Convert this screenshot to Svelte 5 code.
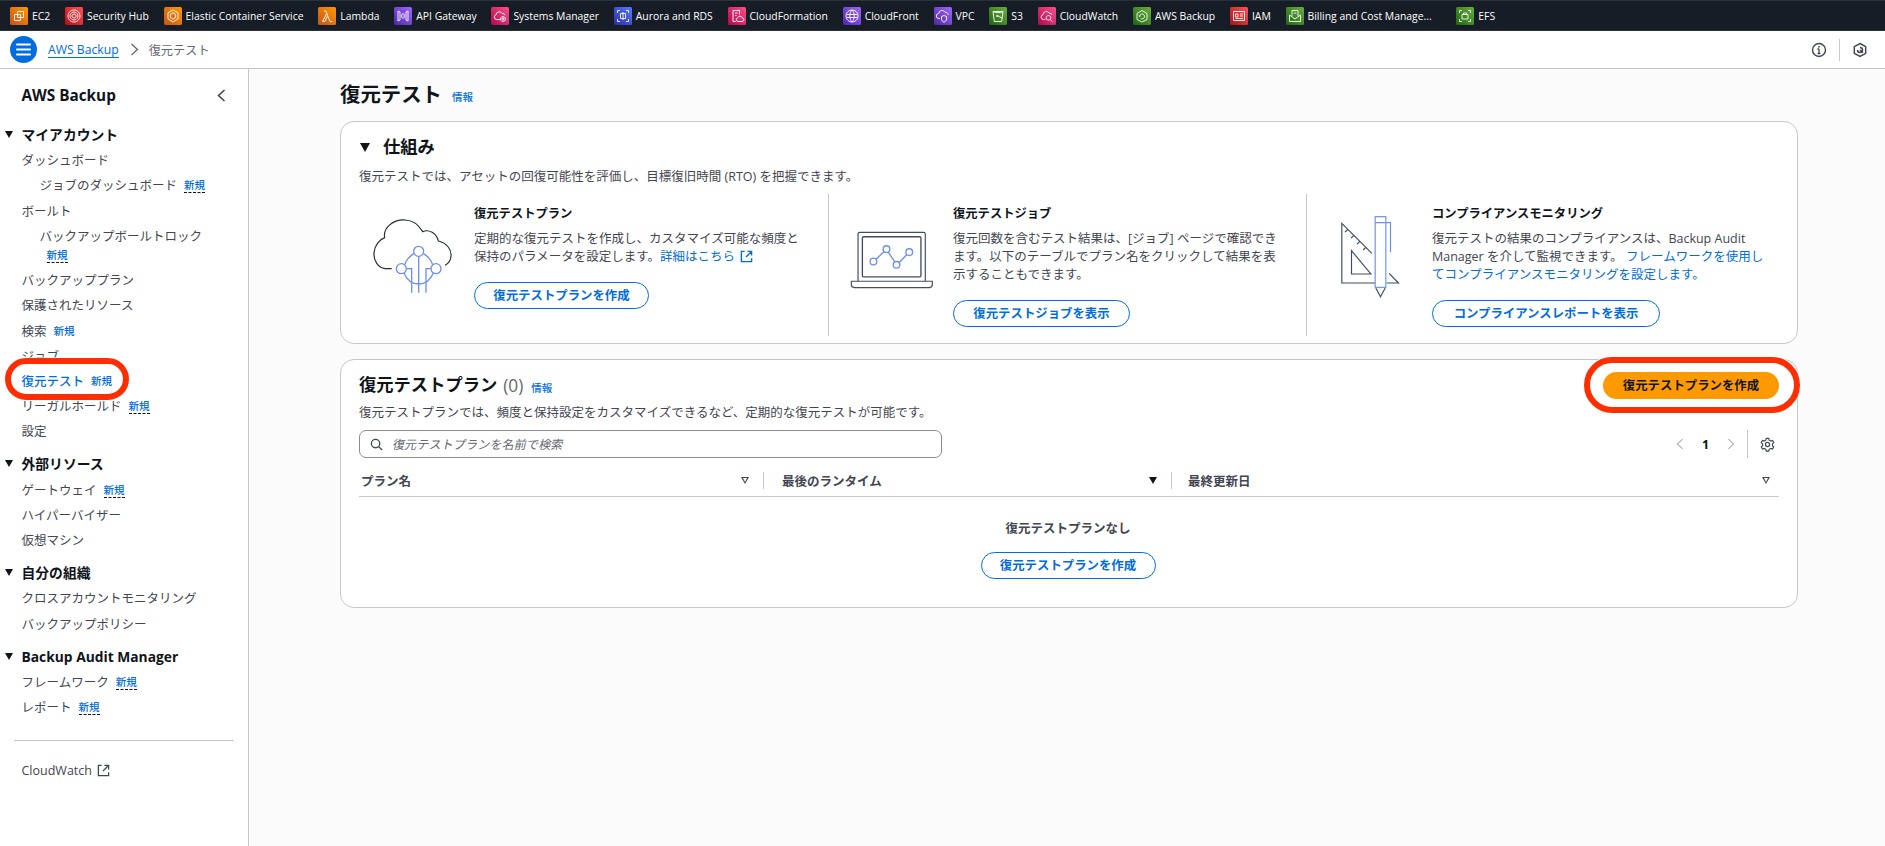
<script>
  const services = [
    { n: 'EC2', g: 'o', d: ['M7.5 4.5h6v6h-6z', 'M4.5 7.5h6v6h-6z'] },
    { n: 'Security Hub', g: 'r', d: ['M9 3a6 6 0 1 0 .01 0z', 'M9 5a4 4 0 1 0 .01 0z', 'M9 7a2 2 0 1 0 .01 0z'] },
    { n: 'Elastic Container Service', g: 'o', d: ['M9 3l5 2.7v6.2L9 15l-5-3.1V5.7z', 'M9 5.8l2.6 1.5v3.3L9 12.2l-2.6-1.6V7.3z'] },
    { n: 'Lambda', g: 'o', d: ['M4.5 14.5h2.2l3-5.6 2.4 5.6h2.1', 'M9.7 8.9L7.9 4h-1.9', 'M4.5 14.5l4.2-8'] },
    { n: 'API Gateway', g: 'p', d: ['M4 4l2 1v8l-2 1z', 'M14 4l-2 1v8l2 1z', 'M8.5 6.5L7.5 9l1 2.5', 'M9.5 6.5l1 2.5-1 2.5'] },
    { n: 'Systems Manager', g: 'k', d: ['M9 12.5H5.5a2.4 2.4 0 0 1-.4-4.7 3.2 3.2 0 0 1 6-1.3 2.3 2.3 0 0 1 2.8 1.7', 'M12 9.5a2.5 2.5 0 1 0 .01 0z', 'M12 11a1 1 0 1 0 .01 0z'] },
    { n: 'Aurora and RDS', g: 'b', d: ['M3.5 6V3.5H6', 'M12 3.5h2.5V6', 'M3.5 12v2.5H6', 'M12 14.5h2.5V12', 'M6.5 6.5h5v5h-5z', 'M9 5v8'] },
    { n: 'CloudFormation', g: 'k', d: ['M5 3.5h6.5v3.8', 'M5 3.5v11h3', 'M7 6h2.5', 'M7 8.5h1.5', 'M10 14.5a2 2 0 0 1-.3-3.9 2.4 2.4 0 0 1 4.5.3 1.8 1.8 0 0 1-.2 3.6z'] },
    { n: 'CloudFront', g: 'p', d: ['M9 3a6 6 0 1 0 .01 0z', 'M9 3c-3 3-3 9 0 12', 'M9 3c3 3 3 9 0 12', 'M3.5 7.5h11', 'M3.5 10.5h11'] },
    { n: 'VPC', g: 'p', d: ['M6 11.5H5a2.5 2.5 0 0 1-.3-5 3.4 3.4 0 0 1 6.4-1.2 2.6 2.6 0 0 1 3 2.6', 'M10 8.5l2.5 1v2.5c0 1.5-1 2.5-2.5 3.2-1.5-.7-2.5-1.7-2.5-3.2V9.5z'] },
    { n: 'S3', g: 'g', d: ['M4 4.5h10l-1.3 10H5.3z', 'M4 4.5c2 1.5 8 1.5 10 0', 'M8 8.5l5 2.5', 'M8 8.5a.6.6 0 1 0 .01 0z'] },
    { n: 'CloudWatch', g: 'k', d: ['M7.5 12.5H5.3a2.5 2.5 0 0 1-.3-4.9 3.3 3.3 0 0 1 6.2-1.4 2.5 2.5 0 0 1 2.9 1.8', 'M10.5 8.5a2.3 2.3 0 1 0 .01 0z', 'M12.2 12.5l2.3 2.3'] },
    { n: 'AWS Backup', g: 'g', d: ['M9 3.5l5 3v6l-5 2.5-5-2.5v-6z', 'M6.5 9.5a2.5 2.5 0 1 1 1.2 2.1', 'M6 8.5l.5 1 1-.5'] },
    { n: 'IAM', g: 'r', d: ['M3.5 4.5h11v9h-11z', 'M5.5 7h2.5v3H5.5z', 'M10 7h3', 'M10 9h3', 'M5.5 11.5h7.5'] },
    { n: 'Billing and Cost Manage...', g: 'g', trunc: true, d: ['M6 9V3.5h6V9', 'M3.5 8l5.5 4 5.5-4v6.5h-11z', 'M7.8 6h2.4'] },
    { n: 'EFS', g: 'g', d: ['M3.5 6V3.5H6', 'M12 3.5h2.5V6', 'M3.5 12v2.5H6', 'M12 14.5h2.5V12', 'M6 7.5h6v4.5H6z', 'M7.5 7.5V6h3v1.5'] }
  ];

  const sections = [
    {
      title: 'マイアカウント',
      items: [
        { t: 'ダッシュボード' },
        { t: 'ジョブのダッシュボード', sub: true, badge: 'dash' },
        { t: 'ボールト' },
        { t: 'バックアップボールトロック', sub: true, badge: 'dash', wrap: true },
        { t: 'バックアッププラン' },
        { t: '保護されたリソース' },
        { t: '検索', badge: 'plain' },
        { t: 'ジョブ' },
        { t: '復元テスト', badge: 'plain', active: true },
        { t: 'リーガルホールド', badge: 'dash' },
        { t: '設定' }
      ]
    },
    {
      title: '外部リソース',
      items: [{ t: 'ゲートウェイ', badge: 'dash' }, { t: 'ハイパーバイザー' }, { t: '仮想マシン' }]
    },
    { title: '自分の組織', items: [{ t: 'クロスアカウントモニタリング' }, { t: 'バックアップポリシー' }] },
    {
      title: 'Backup Audit Manager',
      items: [{ t: 'フレームワーク', badge: 'dash' }, { t: 'レポート', badge: 'dash' }]
    }
  ];
</script>

<div class="page">
  <svg class="defs" width="0" height="0" aria-hidden="true">
    <defs>
      <linearGradient id="g-o" x1="0" y1="1" x2="1" y2="0"><stop offset="0" stop-color="#c8511b" /><stop offset="1" stop-color="#ff9900" /></linearGradient>
      <linearGradient id="g-r" x1="0" y1="1" x2="1" y2="0"><stop offset="0" stop-color="#bd0816" /><stop offset="1" stop-color="#ff5252" /></linearGradient>
      <linearGradient id="g-p" x1="0" y1="1" x2="1" y2="0"><stop offset="0" stop-color="#4d27a8" /><stop offset="1" stop-color="#a166ff" /></linearGradient>
      <linearGradient id="g-k" x1="0" y1="1" x2="1" y2="0"><stop offset="0" stop-color="#b0084d" /><stop offset="1" stop-color="#ff4f8b" /></linearGradient>
      <linearGradient id="g-b" x1="0" y1="1" x2="1" y2="0"><stop offset="0" stop-color="#2e27ad" /><stop offset="1" stop-color="#527fff" /></linearGradient>
      <linearGradient id="g-g" x1="0" y1="1" x2="1" y2="0"><stop offset="0" stop-color="#1b660f" /><stop offset="1" stop-color="#6cae3e" /></linearGradient>
    </defs>
  </svg>

  <header class="topbar">
    {#each services as s}
      <div class="svc" class:trunc={s.trunc}>
        <svg class="svc-icon" viewBox="0 0 18 18">
          <rect width="18" height="18" rx="1.5" fill="url(#g-{s.g})" />
          {#each s.d as p}
            <path d={p} fill="none" stroke="#fff" stroke-width="0.9" />
          {/each}
        </svg>
        <span>{s.n}</span>
      </div>
    {/each}
  </header>

  <div class="crumbs">
    <div class="burger">
      <svg viewBox="0 0 27 27" width="27" height="27">
        <circle cx="13.5" cy="13.5" r="13.5" fill="#006ce0" />
        <path d="M7 8.5h13M7 13.5h13M7 18.5h13" stroke="#fff" stroke-width="2" stroke-linecap="round" />
      </svg>
    </div>
    <a class="crumb-link">AWS Backup</a>
    <svg class="crumb-sep" viewBox="0 0 9 13" width="9" height="13"><path d="M1.5 1l6 5.5-6 5.5" fill="none" stroke="#656871" stroke-width="1.3" /></svg>
    <span class="crumb-cur">復元テスト</span>
    <div class="crumb-tools">
      <svg viewBox="0 0 16 16" width="16" height="16"><circle cx="8" cy="8" r="6.5" fill="none" stroke="#424650" stroke-width="1.4" /><path d="M8 7v4.5M6.5 11.5h3M6.5 7H8" fill="none" stroke="#424650" stroke-width="1.3" /><circle cx="8" cy="4.8" r=".9" fill="#424650" /></svg>
      <i class="tool-sep"></i>
      <svg viewBox="0 0 16 16" width="16" height="16"><path d="M8 1.5l5.7 3.2v6.6L8 14.5l-5.7-3.2V4.7z" fill="none" stroke="#424650" stroke-width="1.5" /><path d="M5.5 8a2.5 2.5 0 1 0 2.5-2.5M8 8l3 2.5" fill="none" stroke="#424650" stroke-width="1.5" /></svg>
    </div>
  </div>

  <div class="body">
    <aside class="side">
      <div class="side-head">
        <span>AWS Backup</span>
        <svg viewBox="0 0 9 13" width="9" height="13"><path d="M7.5 1l-6 5.5 6 5.5" fill="none" stroke="#424650" stroke-width="1.6" /></svg>
      </div>
      {#each sections as sec}
        <section class="sec">
          <div class="sec-title"><i class="tri"></i>{sec.title}</div>
          {#each sec.items as it}
            <div class="item" class:sub={it.sub} class:active={it.active} class:wrap={it.wrap}>
              <span class="label">{it.t}</span>
              {#if it.badge}
                <span class="new" class:dash={it.badge === 'dash'}>新規</span>
              {/if}
            </div>
          {/each}
        </section>
      {/each}
      <hr class="side-rule" />
      <div class="side-ext">
        CloudWatch
        <svg viewBox="0 0 14 14" width="13" height="13"><path d="M5 1.5H1.5v11h11V9M8 1.5h4.5V6M12.5 1.5L6.5 7.5" fill="none" stroke="#424650" stroke-width="1.4" /></svg>
      </div>
    </aside>

    <main class="main">
      <div class="page-title">
        <h1>復元テスト</h1>
        <a class="info">情報</a>
      </div>

      <section class="card how">
        <div class="how-title"><i class="tri big"></i><h2>仕組み</h2></div>
        <p class="how-desc">復元テストでは、アセットの回復可能性を評価し、目標復旧時間 (RTO) を把握できます。</p>
        <div class="how-grid">
          <div class="col">
            <div class="art art1">
              <svg viewBox="120 435 255 240" width="85" height="80">
                <path d="M185 593H165C145 590 130 570 132 545C134 522 150 505 164 500C158 470 190 445 225 447C250 448 268 465 278 482C296 474 320 486 325 510C350 516 365 535 363 555C362 570 355 578 345 583" fill="none" stroke="#232b37" stroke-width="3.5" />
                <g fill="none" stroke="#6c8ff5" stroke-width="4">
                  <circle cx="266" cy="541" r="15" /><circle cx="214" cy="593" r="15" /><circle cx="318" cy="593" r="15" />
                  <path d="M252 548A60 60 0 0 0 224 581M280 548A60 60 0 0 1 308 581M222 606C240 650 292 650 310 606" />
                  <path d="M245 665V593H230M266 556V665M288 665V593H303" />
                </g>
              </svg>
            </div>
            <div class="col-text">
              <h3>復元テストプラン</h3>
              <p>定期的な復元テストを作成し、カスタマイズ可能な頻度と保持のパラメータを設定します。<a class="link">詳細はこちら <svg class="ext" viewBox="0 0 14 14" width="13" height="13"><path d="M5 1.5H1.5v11h11V9M8 1.5h4.5V6M12.5 1.5L6.5 7.5" fill="none" stroke="#006ce0" stroke-width="1.5" /></svg></a></p>
              <button class="btn w1">復元テストプランを作成</button>
            </div>
          </div>
          <div class="col">
            <div class="art art2">
              <svg viewBox="85 175 260 185" width="87" height="62">
                <g fill="none" stroke="#414d5c">
                  <path d="M115 330V190q0-5 5-5h191q5 0 5 5v140" stroke-width="3.5" />
                  <rect x="128" y="198" width="175" height="120" rx="4" stroke-width="4" />
                  <path d="M95 331h242v10q0 9-9 9H104q-9 0-9-9z" stroke-width="3.5" />
                </g>
                <g fill="none" stroke="#6c8ff5" stroke-width="4">
                  <circle cx="161" cy="272" r="10" /><circle cx="200" cy="235" r="10" /><circle cx="230" cy="282" r="10" /><circle cx="268" cy="244" r="10" />
                  <path d="M169 265L193 242M205 244L225 273M238 275L261 251" />
                </g>
              </svg>
            </div>
            <div class="col-text">
              <h3>復元テストジョブ</h3>
              <p>復元回数を含むテスト結果は、[ジョブ] ページで確認できます。以下のテーブルでプラン名をクリックして結果を表示することもできます。</p>
              <button class="btn w2">復元テストジョブを表示</button>
            </div>
          </div>
          <div class="col">
            <div class="art art3">
              <svg viewBox="120 130 185 255" width="62" height="85">
                <g fill="none" stroke="#414d5c" stroke-width="3.5">
                  <path d="M228 337H128V158L218 248M270 308L298 337H262" />
                  <path d="M157 240V310H215z" />
                  <path d="M146 176l-8 8M164 194l-8 8M182 212l-8 8M200 230l-8 8" />
                  <path d="M230 352L244 378L258 352" />
                </g>
                <g fill="none" stroke="#6c8ff5" stroke-width="3.5">
                  <rect x="228" y="138" width="32" height="212" />
                  <path d="M228 156H274V245" />
                </g>
              </svg>
            </div>
            <div class="col-text">
              <h3>コンプライアンスモニタリング</h3>
              <p>復元テストの結果のコンプライアンスは、Backup Audit Manager を介して監視できます。 <a class="link">フレームワークを使用してコンプライアンスモニタリングを設定します。</a></p>
              <button class="btn w3">コンプライアンスレポートを表示</button>
            </div>
          </div>
        </div>
      </section>

      <section class="card plans">
        <div class="plans-head">
          <div>
            <div class="plans-title"><h2>復元テストプラン</h2><span class="count">(0)</span><a class="info">情報</a></div>
            <p class="plans-desc">復元テストプランでは、頻度と保持設定をカスタマイズできるなど、定期的な復元テストが可能です。</p>
          </div>
          <button class="btn primary">復元テストプランを作成</button>
        </div>
        <div class="toolbar">
          <div class="search">
            <svg viewBox="0 0 14 14" width="13" height="13"><circle cx="6" cy="6" r="4.5" fill="none" stroke="#424650" stroke-width="1.4" /><path d="M9.5 9.5L13 13" stroke="#424650" stroke-width="1.4" /></svg>
            <span>復元テストプランを名前で検索</span>
          </div>
          <div class="pager">
            <svg viewBox="0 0 9 13" width="8" height="12"><path d="M7.5 1l-6 5.5 6 5.5" fill="none" stroke="#b4b4bb" stroke-width="1.4" /></svg>
            <b>1</b>
            <svg viewBox="0 0 9 13" width="8" height="12"><path d="M1.5 1l6 5.5-6 5.5" fill="none" stroke="#b4b4bb" stroke-width="1.4" /></svg>
            <i class="pager-sep"></i>
            <svg viewBox="0 0 16 16" width="15" height="15"><path d="M6.6 1.5h2.8l.5 2 1.8 1 2-.6 1.4 2.4-1.5 1.4v2l1.5 1.4-1.4 2.4-2-.6-1.8 1-.5 2H6.6l-.5-2-1.8-1-2 .6-1.4-2.4 1.5-1.4v-2L.9 6.3l1.4-2.4 2 .6 1.8-1z" fill="none" stroke="#424650" stroke-width="1.3" transform="translate(.5 .1) scale(.94)" /><circle cx="8" cy="8" r="2.2" fill="none" stroke="#424650" stroke-width="1.3" /></svg>
          </div>
        </div>
        <div class="thead">
          <div class="th a"><span>プラン名</span><i class="sort"></i></div>
          <div class="th b"><span>最後のランタイム</span><i class="sort fill"></i></div>
          <div class="th c"><span>最終更新日</span><i class="sort"></i></div>
        </div>
        <div class="empty">
          <p>復元テストプランなし</p>
          <button class="btn w1">復元テストプランを作成</button>
        </div>
      </section>
    </main>
  </div>

  <div class="mark mark-nav"></div>
  <div class="mark mark-btn"></div>
</div>

<style>
  :global(body) {
    margin: 0;
    background: #fbfbfb;
  }
  .page {
    position: relative;
    height: 846px;
    overflow: hidden;
    font-family: 'Open Sans', 'Noto Sans CJK JP', sans-serif;
    font-size: 12.5px;
    color: #424650;
  }
  .defs {
    position: absolute;
  }
  .topbar {
    height: 31px;
    box-sizing: border-box;
    background: #161d26;
    border-top: 1px solid #2a313b;
    border-bottom: 1px solid #2a313b;
    display: flex;
    align-items: center;
    gap: 14.75px;
    padding: 1px 0 0 10px;
    color: #fff;
    font-size: 10.4px;
    white-space: nowrap;
  }
  .svc {
    display: flex;
    align-items: center;
    gap: 4px;
  }
  .svc.trunc span {
    width: 134px;
  }
  .svc-icon {
    width: 18px;
    height: 18px;
    display: block;
    flex: none;
  }
  .crumbs {
    height: 38px;
    box-sizing: border-box;
    background: #fff;
    border-bottom: 1.5px solid #c6c6cd;
    display: flex;
    align-items: center;
    padding: 0 0 0 10px;
  }
  .burger {
    width: 27px;
    height: 27px;
    margin-right: 11px;
  }
  .burger svg {
    display: block;
  }
  .crumb-link {
    color: #006ce0;
    border-bottom: 1px solid #006ce0;
    font-size: 12.2px;
    line-height: 15px;
  }
  .crumb-sep {
    margin: 0 10px 0 11px;
  }
  .crumb-cur {
    font-size: 12.2px;
    color: #656871;
  }
  .crumb-tools {
    margin-left: auto;
    display: flex;
    align-items: center;
    padding-right: 17px;
    gap: 12px;
  }
  .tool-sep {
    width: 1px;
    height: 22px;
    background: #c6c6cd;
  }
  .body {
    display: flex;
    height: 777px;
  }
  .side {
    width: 249px;
    flex: none;
    box-sizing: border-box;
    background: #fff;
    border-right: 1.5px solid #c6c6cd;
    padding: 13px 14px 0 21.5px;
  }
  .side-head {
    height: 26px;
    display: flex;
    align-items: center;
    justify-content: space-between;
    font-size: 15.3px;
    font-weight: 700;
    color: #0f141a;
    padding-right: 8px;
    margin-bottom: 14px;
  }
  .sec {
    margin-bottom: 7px;
  }
  .sec-title {
    position: relative;
    height: 26.2px;
    line-height: 25.2px;
    font-size: 13.8px;
    font-weight: 700;
    color: #0f141a;
  }
  .tri {
    display: block;
    position: absolute;
    left: -17px;
    top: 9px;
    width: 0;
    height: 0;
    border-left: 4.5px solid transparent;
    border-right: 4.5px solid transparent;
    border-top: 7.5px solid #0f141a;
  }
  .item {
    min-height: 25.2px;
    display: flex;
    align-items: center;
    gap: 7px;
    line-height: 19px;
    white-space: nowrap;
  }
  .item.sub {
    padding-left: 18px;
  }
  .item.wrap {
    flex-wrap: wrap;
    gap: 0;
    align-content: flex-start;
    box-sizing: border-box;
    min-height: 44.4px;
    padding-top: 3px;
  }
  .item.wrap .new {
    margin: 2px 0 0 7px;
  }
  .item.wrap .label {
    width: 100%;
  }
  .item.active .label {
    color: #006ce0;
    font-weight: 500;
  }
  .new {
    color: #006ce0;
    font-size: 10.5px;
    line-height: 14px;
    font-weight: 500;
    border-bottom: 1px solid transparent;
  }
  .new.dash {
    border-bottom: 1px dashed #0f141a;
  }
  .side-rule {
    border: 0;
    border-top: 1px solid #c6c6cd;
    margin: 19.5px 0 0 -8px;
    width: 220px;
  }
  .side-ext {
    margin-top: 21px;
    display: flex;
    align-items: center;
    gap: 5px;
    line-height: 18px;
  }
  .main {
    flex: 1;
    min-width: 0;
    padding: 0 87px 0 91px;
  }
  .page-title {
    height: 52px;
    display: flex;
    align-items: center;
    gap: 10px;
    padding-bottom: 2px;
    box-sizing: border-box;
  }
  h1 {
    margin: 0;
    font-size: 20.4px;
    font-weight: 700;
    color: #0f141a;
    line-height: 28px;
  }
  .info {
    color: #006ce0;
    font-size: 10.5px;
    font-weight: 500;
    padding-top: 5px;
  }
  .card {
    background: #fff;
    border: 1px solid #c6c6cd;
    border-radius: 14px;
    box-sizing: border-box;
  }
  .how {
    height: 223px;
    padding: 13px 12px 0 8px;
    margin-bottom: 15px;
  }
  .how-title {
    position: relative;
    height: 24px;
    padding-left: 34px;
    display: flex;
    align-items: center;
  }
  .tri.big {
    left: 11px;
    top: 8px;
    border-left-width: 5.5px;
    border-right-width: 5.5px;
    border-top-width: 9px;
  }
  h2 {
    margin: 0;
    font-size: 17.3px;
    font-weight: 700;
    color: #0f141a;
    line-height: 24px;
  }
  .how-desc {
    margin: 9px 0 0 10px;
    line-height: 18px;
  }
  .how-grid {
    display: grid;
    grid-template-columns: 479px 478px 1fr;
    margin-top: 8px;
    height: 142px;
  }
  .col {
    display: flex;
    padding-right: 22px;
  }
  .col + .col {
    border-left: 1px solid #c6c6cd;
  }
  .col:last-child {
    padding-right: 12px;
  }
  .art {
    flex: none;
    width: 125px;
    box-sizing: border-box;
  }
  .art svg {
    display: block;
  }
  .art1 {
    padding: 22px 0 0 21px;
  }
  .art2 {
    padding: 35px 0 0 19px;
    width: 124px;
  }
  .art3 {
    padding: 20px 0 0 32px;
  }
  .col-text {
    padding-top: 11px;
    min-width: 0;
  }
  .col-text h3 {
    margin: 0;
    font-size: 12.3px;
    line-height: 18px;
    font-weight: 700;
    color: #0f141a;
  }
  .col-text p {
    margin: 7px 0 0;
    line-height: 18px;
  }
  .link {
    color: #006ce0;
  }
  .ext {
    vertical-align: -2px;
    margin-left: 2px;
  }
  .btn {
    display: block;
    height: 27px;
    box-sizing: border-box;
    padding: 0;
    background: #fff;
    border: 1px solid #006ce0;
    border-radius: 14px;
    color: #006ce0;
    font: inherit;
    font-size: 12.4px;
    font-weight: 700;
    line-height: 25px;
    text-align: center;
    white-space: nowrap;
  }
  .col-text .btn {
    margin-top: 16px;
  }
  .w1 {
    width: 175px;
  }
  .w2 {
    width: 177px;
  }
  .w3 {
    width: 228px;
  }
  .plans {
    height: 249px;
    padding: 13px 18px 0;
  }
  .plans-head {
    display: flex;
    justify-content: space-between;
    align-items: flex-start;
    height: 56px;
  }
  .plans-title {
    display: flex;
    align-items: center;
    height: 24px;
  }
  .count {
    font-size: 17.3px;
    color: #656871;
    margin-left: 6px;
  }
  .plans-title .info {
    margin-left: 8px;
  }
  .plans-desc {
    margin: 7px 0 0;
    line-height: 18px;
  }
  .primary {
    width: 176px;
    margin-top: -1px;
    background: #ff9900;
    border: 0;
    color: #0f141a;
    line-height: 27px;
  }
  .toolbar {
    display: flex;
    align-items: center;
    justify-content: space-between;
    height: 28px;
    margin-top: 1px;
  }
  .search {
    width: 583px;
    height: 28px;
    box-sizing: border-box;
    border: 1px solid #8c8c94;
    border-radius: 7px;
    display: flex;
    align-items: center;
    padding-left: 10px;
    gap: 10px;
    color: #656871;
    font-size: 12.2px;
  }
  .search span {
    display: inline-block;
    transform: skewX(-12deg);
  }
  .pager {
    display: flex;
    align-items: center;
    gap: 0;
    height: 28px;
    color: #0f141a;
  }
  .pager b {
    width: 43px;
    text-align: center;
    font-size: 12.5px;
  }
  .pager-sep {
    width: 1px;
    height: 28px;
    background: #c6c6cd;
    margin: 0 12px 0 12px;
  }
  .pager svg:last-child {
    margin-right: 4px;
  }
  .thead {
    display: grid;
    grid-template-columns: 404px 408px 1fr;
    height: 39px;
    box-sizing: border-box;
    border-bottom: 1px solid #c6c6cd;
    align-items: center;
    padding-top: 7px;
    font-weight: 700;
  }
  .th {
    display: flex;
    align-items: center;
    justify-content: space-between;
    height: 17px;
    box-sizing: border-box;
    padding-right: 14px;
  }
  .th.a {
    padding-left: 2px;
  }
  .th.b,
  .th.c {
    border-left: 1px solid #c6c6cd;
  }
  .th.b {
    padding-left: 18px;
  }
  .th.c {
    padding-left: 16px;
    padding-right: 9px;
  }
  .sort {
    position: relative;
    width: 0;
    height: 0;
    border-left: 4.5px solid transparent;
    border-right: 4.5px solid transparent;
    border-top: 7.5px solid #424650;
  }
  .sort:not(.fill)::after {
    content: '';
    position: absolute;
    left: -2.5px;
    top: -6.2px;
    border-left: 2.5px solid transparent;
    border-right: 2.5px solid transparent;
    border-top: 4px solid #fff;
  }
  .sort.fill {
    border-top-color: #0f141a;
  }
  .empty {
    display: flex;
    flex-direction: column;
    align-items: center;
    padding: 23px 2px 0 0;
  }
  .empty p {
    margin: 0 0 14px;
    line-height: 18px;
    font-weight: 700;
  }
  .mark {
    position: absolute;
    box-sizing: border-box;
    border: 6px solid #ff2e00;
    box-shadow: 0 0 0 1px rgba(255, 255, 255, 0.7);
  }
  .mark-nav {
    left: 5px;
    top: 358px;
    width: 124px;
    height: 42px;
    border-radius: 21px;
  }
  .mark-btn {
    left: 1584px;
    top: 357px;
    width: 216px;
    height: 56px;
    border-radius: 28px;
  }
</style>
